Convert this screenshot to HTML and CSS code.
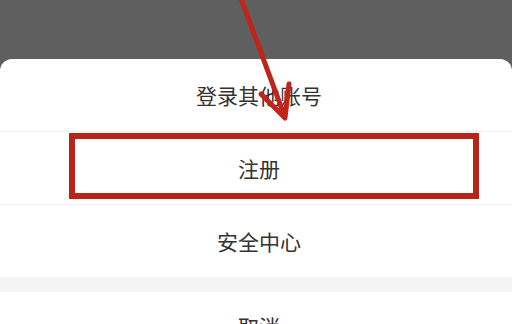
FILE: index.html
```html
<!DOCTYPE html>
<html lang="zh-CN">
<head>
<meta charset="utf-8">
<title>账号菜单</title>
<link rel="stylesheet" href="styles.css">
</head>
<body>
<div class="screen">
  <div class="sheet">
    <div class="row">登录其他账号</div>
    <div class="row">注册</div>
    <div class="row">安全中心</div>
    <div class="gap"></div>
    <div class="row cancel">取消</div>
  </div>
  <div class="highlight"></div>
  <svg class="arrow" width="512" height="324" viewBox="0 0 512 324">
    <line x1="240" y1="-4" x2="283" y2="112" stroke="#c0241b" stroke-width="5" stroke-linecap="round"/>
    <polyline points="261,94 285,118 289,84" fill="none" stroke="#c0241b" stroke-width="5" stroke-linecap="round" stroke-linejoin="round"/>
  </svg>
</div>
</body>
</html>
```

FILE: styles.css
```css
html, body {
  margin: 0;
  padding: 0;
}
body {
  width: 512px;
  height: 324px;
  overflow: hidden;
  background: #5f5f5f;
  font-family: "Noto Sans CJK SC", "Noto Sans", sans-serif;
}
.screen {
  position: relative;
  width: 512px;
  height: 324px;
  overflow: hidden;
  padding-top: 59px;
  box-sizing: border-box;
}
.sheet {
  background: #ffffff;
  border-radius: 12px 12px 0 0;
  display: flex;
  flex-direction: column;
}
.row {
  height: 72px;
  display: flex;
  align-items: center;
  justify-content: center;
  padding-left: 6px;
  font-size: 21px;
  color: #333333;
  border-bottom: 1px solid #efefef;
}
.row:nth-child(3) {
  border-bottom: none;
}
.row.cancel {
  border-bottom: none;
  align-items: flex-start;
  padding-top: 19px;
  box-sizing: border-box;
}
.gap {
  height: 15px;
  background: #f4f4f4;
}
.highlight {
  position: absolute;
  left: 69px;
  top: 133px;
  width: 410px;
  height: 66px;
  box-sizing: border-box;
  border: 6px solid #b8231a;
}
.arrow {
  position: absolute;
  left: 0;
  top: 0;
}
```
